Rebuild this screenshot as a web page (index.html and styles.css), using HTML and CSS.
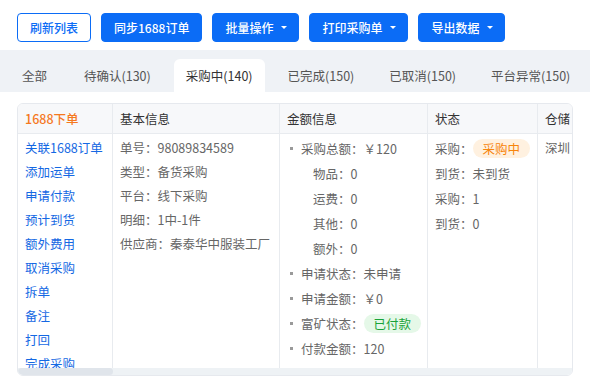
FILE: index.html
```html
<!DOCTYPE html>
<html lang="zh-CN">
<head>
    <meta charset="UTF-8">
    <meta name="viewport" content="width=device-width, initial-scale=1.0">
    <title>采购单列表</title>
    <link rel="stylesheet" href="styles.css">
</head>
<body>
    <div class="toolbar">
        <button class="btn btn-outline">刷新列表</button>
        <button class="btn">同步1688订单</button>
        <button class="btn btn-drop">批量操作<span class="caret"></span></button>
        <button class="btn btn-drop">打印采购单<span class="caret"></span></button>
        <button class="btn btn-drop">导出数据<span class="caret"></span></button>
    </div>

    <div class="tabs">
        <div class="tab">全部</div>
        <div class="tab">待确认(130)</div>
        <div class="tab active">采购中(140)</div>
        <div class="tab">已完成(150)</div>
        <div class="tab">已取消(150)</div>
        <div class="tab">平台异常(150)</div>
    </div>

    <div class="table-box">
        <div class="table-scroll">
            <table class="order-table">
                <colgroup>
                    <col class="col-ops">
                    <col class="col-basic">
                    <col class="col-money">
                    <col class="col-status">
                    <col class="col-store">
                </colgroup>
                <thead>
                    <tr>
                        <th class="th-order">1688下单</th>
                        <th>基本信息</th>
                        <th>金额信息</th>
                        <th>状态</th>
                        <th>仓储</th>
                    </tr>
                </thead>
                <tbody>
                    <tr>
                        <td>
                            <a class="op">关联1688订单</a>
                            <a class="op">添加运单</a>
                            <a class="op">申请付款</a>
                            <a class="op">预计到货</a>
                            <a class="op">额外费用</a>
                            <a class="op">取消采购</a>
                            <a class="op">拆单</a>
                            <a class="op">备注</a>
                            <a class="op">打回</a>
                            <a class="op">完成采购</a>
                        </td>
                        <td>
                            <div class="line">单号：98089834589</div>
                            <div class="line">类型：备货采购</div>
                            <div class="line">平台：线下采购</div>
                            <div class="line">明细：1中-1件</div>
                            <div class="line">供应商：秦泰华中服装工厂</div>
                        </td>
                        <td class="money">
                            <div class="item dot">采购总额：￥120</div>
                            <div class="item sub">物品：0</div>
                            <div class="item sub">运费：0</div>
                            <div class="item sub">其他：0</div>
                            <div class="item sub">额外：0</div>
                            <div class="item dot">申请状态：未申请</div>
                            <div class="item dot">申请金额：￥0</div>
                            <div class="item dot">富矿状态：<span class="tag tag-green">已付款</span></div>
                            <div class="item dot">付款金额：120</div>
                        </td>
                        <td class="state">
                            <div class="item">采购：<span class="tag tag-orange">采购中</span></div>
                            <div class="item">到货：未到货</div>
                            <div class="item">采购：1</div>
                            <div class="item">到货：0</div>
                        </td>
                        <td>
                            <div class="line">深圳</div>
                        </td>
                    </tr>
                </tbody>
            </table>
        </div>
        <div class="scrollbar"><div class="thumb"></div></div>
    </div>
</body>
</html>
```

FILE: styles.css
```css
body {
    margin: 0;
    font-family: "Noto Sans CJK SC", "Noto Sans", sans-serif;
    font-size: 12.5px;
    color: #333;
    background: #fff;
}
.toolbar {
    display: flex;
    gap: 10px;
    padding: 13px 17px 8px;
}
.btn {
    display: flex;
    align-items: center;
    height: 29px;
    padding: 0 12px;
    border: 1px solid #0b6cf6;
    border-radius: 4px;
    background: #0b6cf6;
    color: #fff;
    font-family: inherit;
    font-size: 12px;
    font-weight: 500;
}
.btn-outline {
    background: #fff;
    color: #0b6cf6;
}
.btn-drop {
    padding-right: 11px;
}
.caret {
    width: 0;
    height: 0;
    margin-left: 8px;
    border-left: 3px solid transparent;
    border-right: 3px solid transparent;
    border-top: 3px solid #fff;
}
.tabs {
    display: flex;
    align-items: flex-end;
    gap: 11px;
    height: 42px;
    padding-left: 10px;
    background: #eff2f6;
}
.tab {
    height: 33px;
    line-height: 33px;
    padding: 0 12px;
    color: #555;
    border-radius: 6px 6px 0 0;
}
.tab:first-child {
    margin-right: 2px;
}
.tab.active {
    background: #fff;
    color: #333;
}
.table-box {
    margin: 11px 17px 0;
    border: 1px solid #e6e9ee;
    border-radius: 6px;
    overflow: hidden;
}
.table-scroll {
    height: 264px;
    overflow: hidden;
}
.order-table {
    table-layout: fixed;
    width: 654px;
    border-collapse: separate;
    border-spacing: 0;
}
.col-ops { width: 95px; }
.col-basic { width: 167px; }
.col-money { width: 148px; }
.col-status { width: 110px; }
.col-store { width: 134px; }
.order-table th,
.order-table td {
    border-right: 1px solid #e8ebef;
    text-align: left;
    vertical-align: top;
    padding: 0 7px;
    white-space: nowrap;
    overflow: hidden;
}
.order-table th {
    height: 29px;
    background: #f7f8fa;
    border-bottom: 1px solid #e8ebef;
    font-weight: 400;
    color: #333;
    vertical-align: middle;
}
.order-table th.th-order {
    color: #f5781f;
    font-weight: 500;
}
.order-table td {
    padding-top: 2px;
    height: 300px;
    color: #666;
}
.op {
    display: block;
    line-height: 24px;
    color: #1468e3;
}
.line {
    line-height: 24px;
}
.item {
    height: 25px;
    line-height: 25px;
    display: flex;
    align-items: center;
}
.money .item {
    padding-left: 14px;
    position: relative;
}
.money .item.dot::before {
    content: "";
    position: absolute;
    left: 3px;
    top: 11px;
    width: 3px;
    height: 3px;
    background: #9a9a9a;
}
.money .item.sub {
    padding-left: 26px;
}
.tag {
    display: inline-block;
    height: 19px;
    line-height: 19px;
    padding: 0 10px;
    border-radius: 10px;
}
.tag-orange {
    background: #fff1e0;
    color: #f7850c;
}
.tag-green {
    background: #e5f8e8;
    color: #19a33a;
}
.scrollbar {
    height: 7px;
    background: #eef2f5;
}
.thumb {
    width: 95px;
    height: 7px;
    border-radius: 4px;
    background: #e0e5eb;
}
```
